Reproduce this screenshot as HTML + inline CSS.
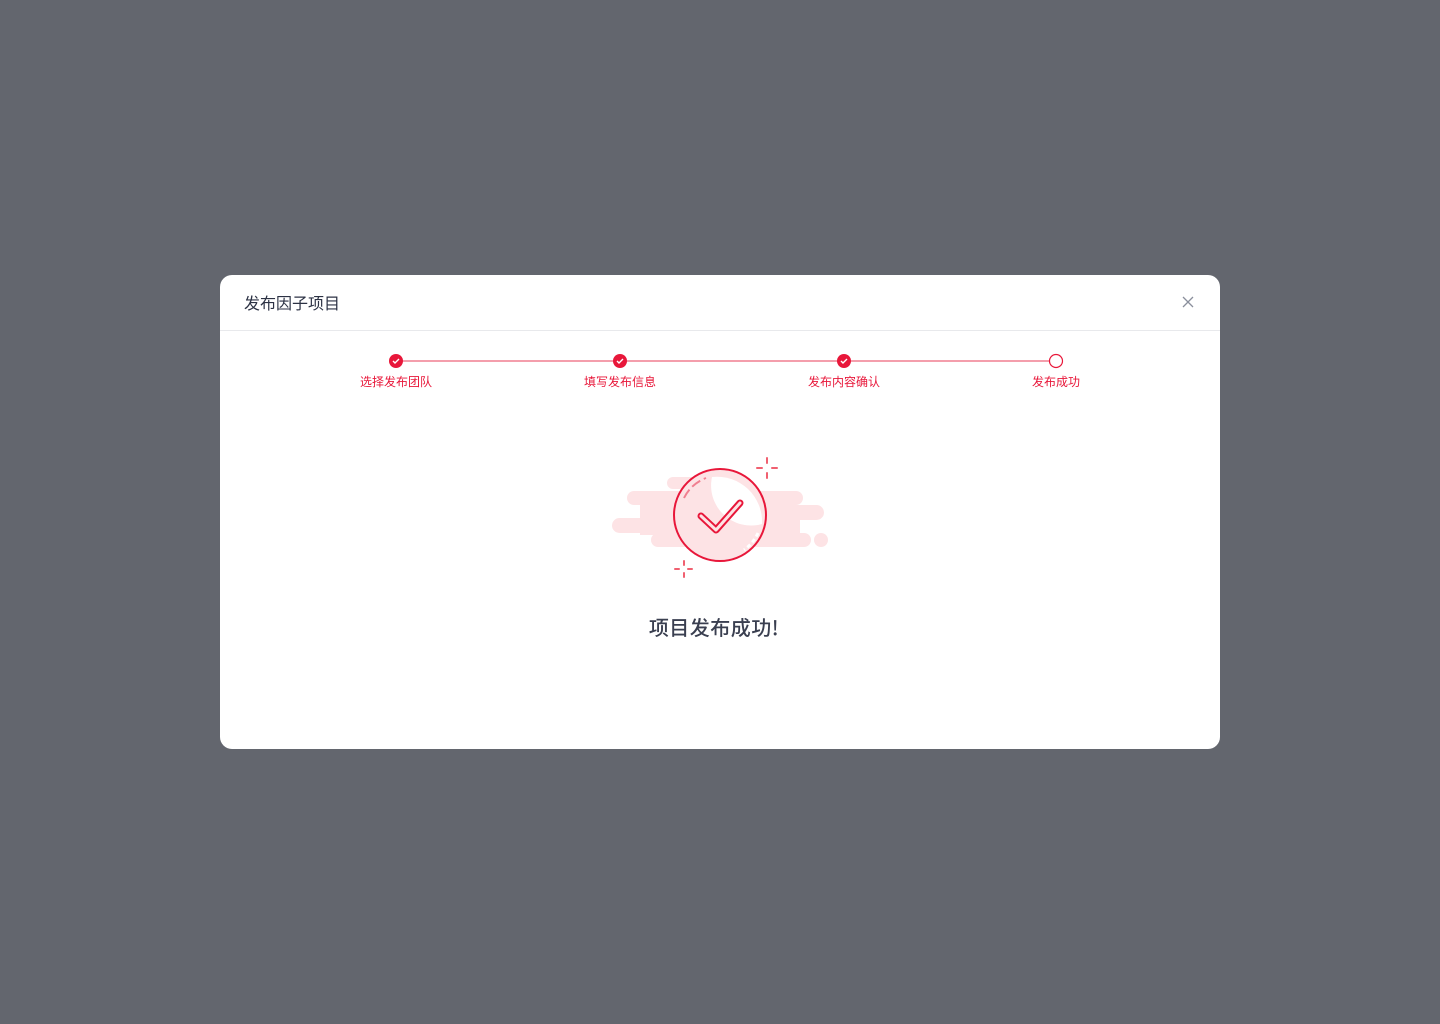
<!DOCTYPE html>
<html><head><meta charset="utf-8"><style>
body{margin:0;width:1440px;height:1024px;background:#63666e;font-family:"Liberation Sans","Noto Sans CJK SC",sans-serif;position:relative;overflow:hidden}
.m{position:absolute;left:220px;top:275px;width:1000px;height:474px;background:#fff;border-radius:12px}
.h{height:55px;border-bottom:1px solid #e8e9ec;position:relative}
.h span{position:absolute;left:24px;top:15px;font-size:16px;color:#2c3244}
.lab{position:absolute;top:98px;font-size:12px;color:#e8173a;transform:translateX(-50%);white-space:nowrap}
.t{position:absolute;left:0;width:1000px;top:337px;text-align:center;font-size:20px;color:#3a3f50;letter-spacing:0.5px;font-family:"Noto Sans CJK SC Medium","Noto Sans CJK SC",sans-serif;font-weight:500}
</style></head><body>
<div class="m">
<div class="h"><span>发布因子项目</span>
<svg style="position:absolute;left:962px;top:21px" width="12" height="12"><path d="M1 1L11 11M11 1L1 11" stroke="#8a8f9c" stroke-width="1.3"/></svg></div>
<svg style="position:absolute;left:0;top:0" width="1000" height="474">
<line x1="176" y1="86" x2="836" y2="86" stroke="#f07f90" stroke-width="1.5"/>
<g fill="#e8173a">
<circle cx="176" cy="86" r="7"/><circle cx="400" cy="86" r="7"/><circle cx="624" cy="86" r="7"/></g>
<g stroke="#fff" stroke-width="1.4" fill="none"><path d="M173 86l2 2 4-4M397 86l2 2 4-4M621 86l2 2 4-4"/></g>
<circle cx="836" cy="86" r="6.5" fill="#fff" stroke="#e8173a" stroke-width="1.2"/>
<g transform="translate(-220,-275)" fill="#fde3e5">
<rect x="667" y="477" width="50" height="12" rx="6"/>
<rect x="627" y="491" width="176" height="14" rx="7"/>
<rect x="612" y="518" width="56" height="15" rx="7.5"/>
<rect x="640" y="505" width="160" height="30" />
<rect x="792" y="505" width="32" height="15" rx="7.5"/>
<rect x="651" y="533" width="160" height="14" rx="7"/>
<circle cx="821" cy="540" r="7"/>
<circle cx="720" cy="515" r="45" fill="#fde3e5"/>
<path d="M712 477a45 45 0 0 1 50 47 40 40 0 0 1-50-47z" fill="#fff"/>
<circle cx="720" cy="515" r="46" fill="none" stroke="#e8173a" stroke-width="2"/>
<path d="M684 498a40 40 0 0 1 22-20" fill="none" stroke="#f07f90" stroke-width="2" stroke-dasharray="10 4"/>
<path d="M758 533a42 42 0 0 1-14 17" fill="none" stroke="#fff" stroke-width="3" stroke-dasharray="4 3"/>
<path d="M701 516l15 14 24-27" fill="none" stroke="#e8173a" stroke-width="7" stroke-linecap="round" stroke-linejoin="round"/>
<path d="M701 516l15 14 24-27" fill="none" stroke="#fde3e5" stroke-width="3" stroke-linecap="round" stroke-linejoin="round"/>
<g stroke="#f06070" stroke-width="2" stroke-linecap="round">
<path d="M767 458v5M767 473v5M757 468h5M772 468h5M684 561v4M684 573v4M675 569h4M688 569h4"/></g>
</g>
</svg>
<div class="lab" style="left:176px">选择发布团队</div>
<div class="lab" style="left:400px">填写发布信息</div>
<div class="lab" style="left:624px">发布内容确认</div>
<div class="lab" style="left:836px">发布成功</div>
<div class="t" style="left:-6px">项目发布成功!</div>
</div>
</body></html>
